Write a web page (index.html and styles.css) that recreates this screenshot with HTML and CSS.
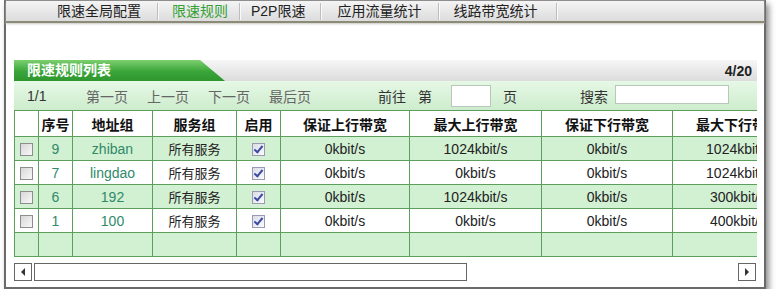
FILE: index.html
```html
<!DOCTYPE html>
<html lang="zh-CN">
  <head>
    <meta charset="UTF-8">
    <title>限速规则</title>
    <link rel="stylesheet" href="styles.css">
  </head>
  <body>
    <div class="window">
      <div class="tabs">
        <span class="tab tab-global">限速全局配置</span>
        <span class="tab tab-rules active">限速规则</span>
        <span class="tab tab-p2p">P2P限速</span>
        <span class="tab tab-app">应用流量统计</span>
        <span class="tab tab-line">线路带宽统计</span>
      </div>

      <div class="content">
        <div class="title-bar">
          <div class="title-tab">限速规则列表</div>
          <div class="count">4/20</div>
        </div>

        <div class="pager">
          <span class="page-num">1/1</span>
          <span class="page-link">第一页</span>
          <span class="page-link">上一页</span>
          <span class="page-link">下一页</span>
          <span class="page-link">最后页</span>
          <span class="goto">前往</span>
          <span class="goto-di">第</span>
          <span class="page-input"></span>
          <span class="page-unit">页</span>
          <span class="search-label">搜索</span>
          <span class="search-input"></span>
        </div>

        <div class="table-wrap">
          <table class="rules">
            <colgroup>
              <col style="width:24px">
              <col style="width:34px">
              <col style="width:80px">
              <col style="width:84px">
              <col style="width:44px">
              <col style="width:129px">
              <col style="width:132px">
              <col style="width:131px">
              <col style="width:131px">
            </colgroup>
            <thead>
              <tr>
                <th></th>
                <th>序号</th>
                <th>地址组</th>
                <th>服务组</th>
                <th>启用</th>
                <th>保证上行带宽</th>
                <th>最大上行带宽</th>
                <th>保证下行带宽</th>
                <th>最大下行带宽</th>
              </tr>
            </thead>
            <tbody>
              <tr class="green">
                <td><span class="box"></span></td>
                <td class="link">9</td>
                <td class="link">zhiban</td>
                <td class="cjk">所有服务</td>
                <td><span class="box checked"></span></td>
                <td>0kbit/s</td>
                <td>1024kbit/s</td>
                <td>0kbit/s</td>
                <td>1024kbit/s</td>
              </tr>
              <tr>
                <td><span class="box"></span></td>
                <td class="link">7</td>
                <td class="link">lingdao</td>
                <td class="cjk">所有服务</td>
                <td><span class="box checked"></span></td>
                <td>0kbit/s</td>
                <td>0kbit/s</td>
                <td>0kbit/s</td>
                <td>1024kbit/s</td>
              </tr>
              <tr class="green">
                <td><span class="box"></span></td>
                <td class="link">6</td>
                <td class="link">192</td>
                <td class="cjk">所有服务</td>
                <td><span class="box checked"></span></td>
                <td>0kbit/s</td>
                <td>1024kbit/s</td>
                <td>0kbit/s</td>
                <td>300kbit/s</td>
              </tr>
              <tr>
                <td><span class="box"></span></td>
                <td class="link">1</td>
                <td class="link">100</td>
                <td class="cjk">所有服务</td>
                <td><span class="box checked"></span></td>
                <td>0kbit/s</td>
                <td>0kbit/s</td>
                <td>0kbit/s</td>
                <td>400kbit/s</td>
              </tr>
              <tr class="green">
                <td></td><td></td><td></td><td></td><td></td><td></td><td></td><td></td><td></td>
              </tr>
            </tbody>
          </table>
        </div>

        <div class="scrollbar">
          <span class="arrow">
            <svg width="6" height="8" viewBox="0 0 6 8"><path d="M5 0 L1 4 L5 8 Z" fill="#333"/></svg>
          </span>
          <span class="thumb"></span>
          <span class="track"></span>
          <span class="arrow">
            <svg width="6" height="8" viewBox="0 0 6 8"><path d="M1 0 L5 4 L1 8 Z" fill="#333"/></svg>
          </span>
        </div>
      </div>
    </div>
  </body>
</html>
```

FILE: styles.css
```css
body {
  margin: 0;
  background: #ffffff;
  font-family: "Liberation Sans", "Noto Sans CJK SC", sans-serif;
  color: #111;
}

.window {
  width: 758px;
  height: 286px;
  margin-left: 4px;
  border: 2px solid #6a6a6a;
  border-top: 1px solid #8a8a8a;
  background: #fff;
  box-shadow: 3px 4px 6px rgba(0, 0, 0, 0.45);
}

.tabs {
  display: flex;
  align-items: center;
  height: 20px;
  padding-left: 35px;
  background: linear-gradient(#f4f4f4, #dcdcdc);
  border-bottom: 2px solid #8b8b78;
  box-shadow: 0 1px 2px #c8c8c0;
}

.tab {
  padding: 0 15px;
  font-size: 14px;
  line-height: 17px;
  color: #222;
  border-right: 1px solid #bdbdbd;
  box-shadow: 1px 0 0 #fafafa;
}

.tab-global { padding: 0 16px; }
.tab-rules { padding: 0 11px 0 14px; }
.tab-p2p { padding: 0 15px 0 11px; }
.tab-app { padding: 0 17px 0 16px; }
.tab-line { padding: 0 19px 0 14px; }

.tab.active {
  color: #33a033;
}

.content {
  padding: 37px 7px 0 8px;
}

.title-bar {
  display: flex;
  justify-content: space-between;
  align-items: center;
  height: 21px;
  background: linear-gradient(#f6f6f6, #dcdcdc);
}

.title-tab {
  width: 211px;
  height: 21px;
  padding-left: 13px;
  box-sizing: border-box;
  font-size: 14px;
  font-weight: bold;
  line-height: 21px;
  color: #fff;
  background: linear-gradient(#7ccf6e, #3aa63a 55%, #2e962e);
  clip-path: polygon(0 0, 186px 0, 211px 100%, 0 100%);
}

.count {
  padding-right: 5px;
  font-size: 14px;
  font-weight: bold;
  color: #222;
}

.pager {
  display: flex;
  align-items: center;
  height: 29px;
  font-size: 14px;
  background: linear-gradient(#e6f8e6, #cdeccd);
  color: #333;
}

.page-num {
  margin-left: 13px;
  width: 59px;
}

.page-link {
  color: #666;
  margin-right: 19px;
}

.goto {
  margin-left: 48px;
}

.goto-di {
  margin-left: 12px;
}

.page-input {
  width: 38px;
  height: 20px;
  margin-left: 19px;
  background: #fff;
  border: 1px solid #b8c8b8;
}

.page-unit {
  margin-left: 12px;
}

.search-label {
  margin-left: 63px;
}

.search-input {
  width: 112px;
  height: 17px;
  margin-left: 7px;
  margin-bottom: 3px;
  background: #fff;
  border: 1px solid #b8c8b8;
}

.table-wrap {
  overflow: hidden;
  width: 743px;
}

.rules {
  table-layout: fixed;
  border-collapse: collapse;
  width: 789px;
  font-size: 14px;
  text-align: center;
  white-space: nowrap;
}

.rules th,
.rules td {
  border: 1px solid #5c9e5c;
  padding: 0;
  overflow: hidden;
}

.rules th {
  height: 25px;
  font-weight: bold;
  background: #fff;
  color: #111;
}

.rules td {
  height: 23px;
  background: #fff;
  color: #222;
}

.rules tr.green td {
  background: #d2f0d2;
}

.rules td.cjk {
  font-size: 13px;
}

.rules td.link {
  color: #2f8a6a;
}

.box {
  display: inline-block;
  width: 11px;
  height: 11px;
  vertical-align: middle;
  border: 1px solid #8e8e8e;
  background: linear-gradient(135deg, #d8d8d8, #f8f8f8);
}

.box.checked {
  position: relative;
  border-color: #9a9ab0;
  background: linear-gradient(135deg, #dcdce8, #fafaff);
}

.box.checked::after {
  content: "";
  position: absolute;
  left: 3px;
  top: 0;
  width: 3px;
  height: 7px;
  border: solid #3a4ea0;
  border-width: 0 2px 2px 0;
  transform: rotate(40deg);
}

.scrollbar {
  display: flex;
  align-items: center;
  gap: 2px;
  width: 742px;
  margin-top: 6px;
}

.arrow {
  display: flex;
  align-items: center;
  justify-content: center;
  width: 16px;
  height: 16px;
  border: 1px solid #666;
  background: #fff;
}

.thumb {
  width: 431px;
  height: 16px;
  border: 1px solid #666;
  background: #fff;
}

.track {
  flex: 1;
}
```
